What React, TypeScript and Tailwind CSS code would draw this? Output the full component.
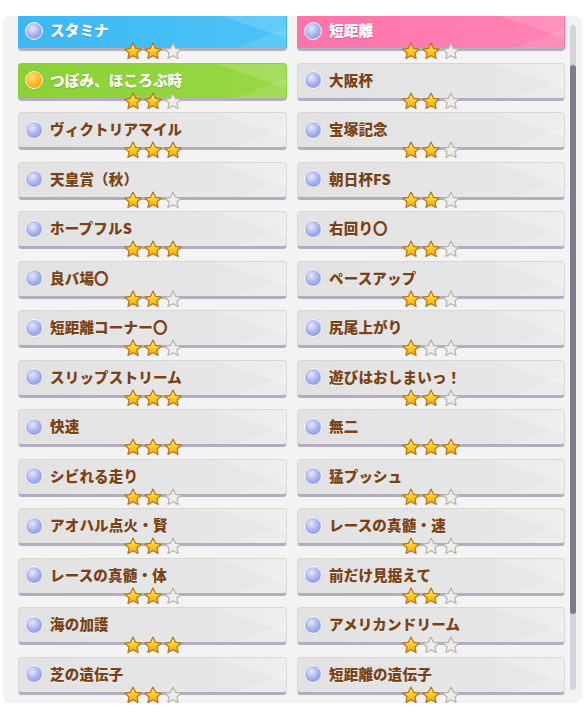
import React from "react";

type Tone = "gray" | "blue" | "green" | "pink";

interface Skill {
  name: string;
  stars: number;
  tone?: Tone;
  gold?: boolean;
}

const LEFT: Skill[] = [
  { name: "スタミナ", stars: 2, tone: "blue" },
  { name: "つぼみ、ほころぶ時", stars: 2, tone: "green", gold: true },
  { name: "ヴィクトリアマイル", stars: 3 },
  { name: "天皇賞（秋）", stars: 2 },
  { name: "ホープフルS", stars: 3 },
  { name: "良バ場〇", stars: 2 },
  { name: "短距離コーナー〇", stars: 2 },
  { name: "スリップストリーム", stars: 3 },
  { name: "快速", stars: 3 },
  { name: "シビれる走り", stars: 2 },
  { name: "アオハル点火・賢", stars: 2 },
  { name: "レースの真髄・体", stars: 2 },
  { name: "海の加護", stars: 3 },
  { name: "芝の遺伝子", stars: 2 },
];

const RIGHT: Skill[] = [
  { name: "短距離", stars: 2, tone: "pink" },
  { name: "大阪杯", stars: 2 },
  { name: "宝塚記念", stars: 2 },
  { name: "朝日杯FS", stars: 2 },
  { name: "右回り〇", stars: 2 },
  { name: "ペースアップ", stars: 2 },
  { name: "尻尾上がり", stars: 1 },
  { name: "遊びはおしまいっ！", stars: 2 },
  { name: "無二", stars: 3 },
  { name: "猛プッシュ", stars: 2 },
  { name: "レースの真髄・速", stars: 1 },
  { name: "前だけ見据えて", stars: 2 },
  { name: "アメリカンドリーム", stars: 1 },
  { name: "短距離の遺伝子", stars: 2 },
];

const TONES: Record<Tone, string> = {
  gray: "bg-gradient-to-r from-[#e2e2e2] to-[#e8e8e8] border-t-[#d6d6d6] border-x-[#d8d8d8]",
  blue: "bg-gradient-to-r from-[#3db8f3] to-[#4cc3f7] border-t-[#3db8f3] border-x-[#3db8f3]",
  green: "bg-gradient-to-r from-[#8ad136] to-[#98d845] border-t-[#8ad136] border-x-[#8ad136]",
  pink: "bg-gradient-to-r from-[#fe74aa] to-[#ff82b4] border-t-[#fe74aa] border-x-[#fe74aa]",
};

const STAR = "M12 1.4l3.2 6.7 7.3.9-5.4 5 1.4 7.2L12 17.7l-6.5 3.5 1.4-7.2-5.4-5 7.3-.9z";

function Star({ on }: { on: boolean }) {
  return (
    <svg width="19" height="18" viewBox="0 0 24 23">
      <defs>
        <linearGradient id="sg" x1="0" y1="0" x2="0" y2="1">
          <stop offset="0" stopColor="#fff29a" />
          <stop offset="0.45" stopColor="#ffd02a" />
          <stop offset="1" stopColor="#f4a20c" />
        </linearGradient>
      </defs>
      <path
        d={STAR}
        fill={on ? "url(#sg)" : "#efedea"}
        stroke={on ? "#b5731a" : "#b7b1a9"}
        strokeWidth="1.5"
        strokeLinejoin="round"
      />
    </svg>
  );
}

function Orb({ gold }: { gold?: boolean }) {
  return (
    <span
      className={
        "block w-[18px] h-[18px] shrink-0 rounded-full border-[1.5px] border-white shadow-[0_0_1px_rgba(0,0,0,0.25)] " +
        (gold
          ? "bg-[radial-gradient(circle_at_40%_35%,#ffe27a_0%,#ffb415_55%,#f39300_100%)]"
          : "bg-[radial-gradient(circle_at_40%_35%,#e4e8ff_0%,#a6b0ec_50%,#7f8bd9_100%)]")
      }
    />
  );
}

function Card({ skill }: { skill: Skill }) {
  const tone = skill.tone ?? "gray";
  const colored = tone !== "gray";
  return (
    <div className="relative h-[38px]">
      <div
        className={
          "relative h-full rounded-[4px] border-t border-x border-b-[3px] border-b-[#b2aebf] overflow-hidden flex items-center pl-[6px] gap-[7px] pb-px " +
          TONES[tone]
        }
      >
        <svg
          className="absolute right-0 top-0 h-full w-[90px]"
          viewBox="0 0 90 34"
          preserveAspectRatio="none"
        >
          <polygon points="20,0 90,0 90,24" fill="#ffffff" opacity={colored ? 0.14 : 0.22} />
          <polygon points="40,34 90,14 90,34" fill="#ffffff" opacity={colored ? 0.1 : 0.16} />
        </svg>
        <Orb gold={skill.gold} />
        <span
          className={
            "relative text-[14.5px] font-black leading-none tracking-[0.2px] " +
            (colored
              ? "text-white [text-shadow:0_1px_1px_rgba(0,0,0,0.18)]"
              : "text-[#7a4216] [text-shadow:0_1px_0_rgba(255,255,255,0.5)]")
          }
        >
          {skill.name}
        </span>
      </div>
      <div className="absolute left-1/2 -translate-x-1/2 bottom-[-9px] flex gap-px">
        {[0, 1, 2].map((i) => (
          <Star key={i} on={i < skill.stars} />
        ))}
      </div>
    </div>
  );
}

export default function App() {
  return (
    <div
      className="w-[586px] h-[715px] bg-white pt-[16px] pl-[3px]"
      style={{ fontFamily: '"Noto Sans CJK JP", "Noto Sans", sans-serif' }}
    >
      <div className="w-[579px] h-[687px] bg-[#f3f3f3] rounded-[7px] overflow-hidden flex pl-[15px] pr-[6px]">
        <div className="w-[547px] -mt-[3px] grid grid-cols-[269px_268px] gap-x-[10px] content-start">
          <div className="flex flex-col gap-[11.5px]">
            {LEFT.map((s) => (
              <Card key={s.name} skill={s} />
            ))}
          </div>
          <div className="flex flex-col gap-[11.5px]">
            {RIGHT.map((s) => (
              <Card key={s.name} skill={s} />
            ))}
          </div>
        </div>
        <div className="ml-[5px] w-[6px] mt-[9px] mb-[13px] rounded-full bg-[#d4d2da] flex flex-col">
          <div className="mt-[40px] h-[549px] rounded-full bg-[#7d7a8e]" />
        </div>
      </div>
    </div>
  );
}
